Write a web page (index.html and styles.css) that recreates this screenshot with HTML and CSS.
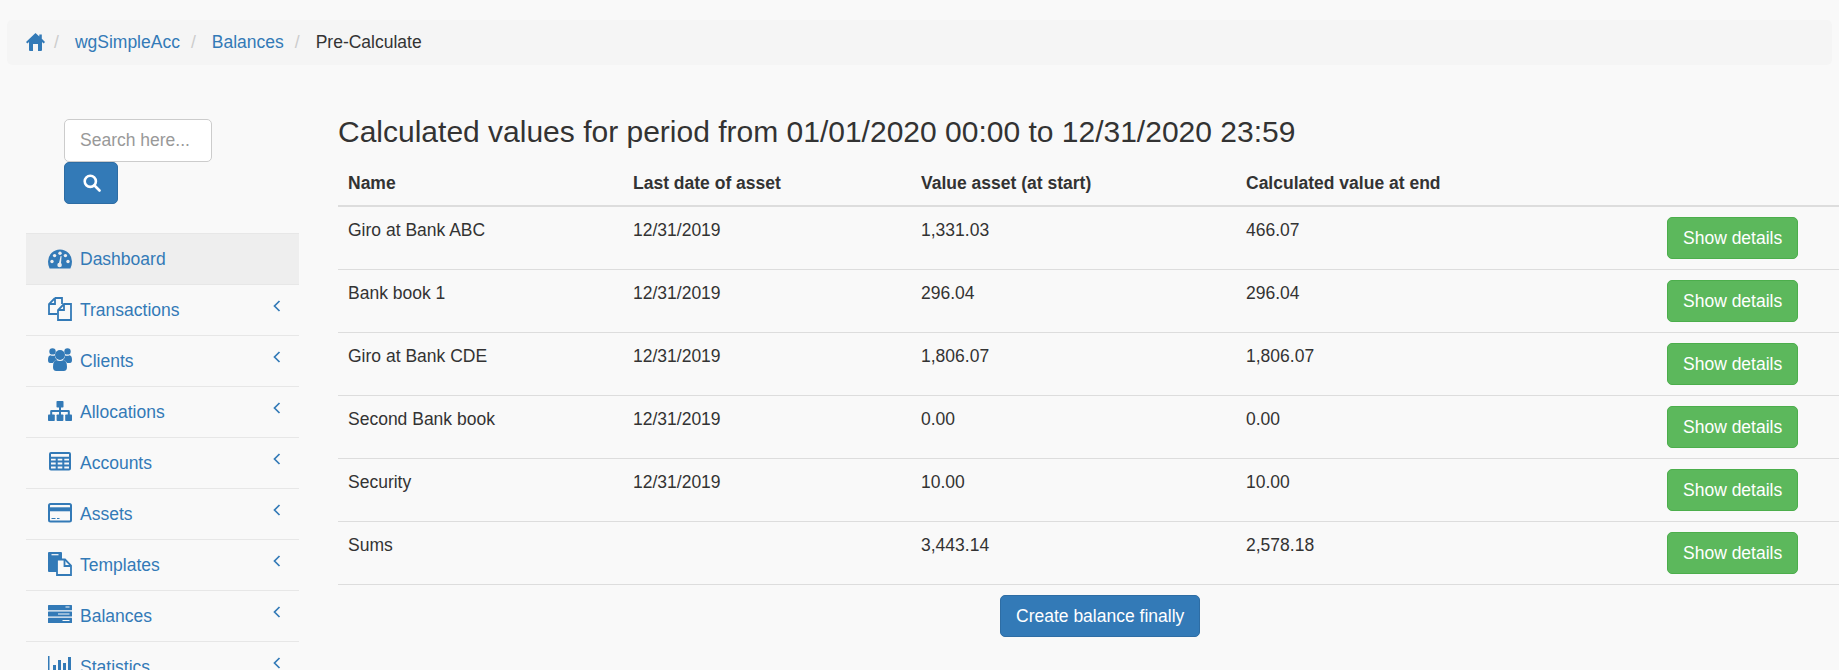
FILE: index.html
```html
<!DOCTYPE html>
<html lang="en">
<head>
  <meta charset="UTF-8" />
  <meta name="viewport" content="width=device-width, initial-scale=1.0"/>
  <title>Pre-Calculate</title>
  <link rel="stylesheet" href="styles.css">
</head>
<body>
  <ol class="breadcrumb">
    <li><a href="#" class="home-link" aria-label="Home">
      <svg class="home-icon" viewBox="0 0 19 18">
        <path d="M9.500 0l3.800 3.500V1.500h2.500v4.300L19 9l-1.300 1.400-1.700-1.500V17q0 1-1 1h-3v-7H7v7H4q-1 0-1-1V8.900l-1.700 1.500L0 9z"/>
      </svg>
    </a></li>
    <li class="crumb"><a href="#">wgSimpleAcc</a></li>
    <li class="crumb"><a href="#">Balances</a></li>
    <li class="crumb active">Pre-Calculate</li>
  </ol>

  <div class="page">
    <aside class="sidebar">
      <form class="search">
        <input type="text" class="search-input" placeholder="Search here..." />
        <button type="button" class="search-btn" aria-label="Search">
          <svg class="search-icon" viewBox="0 0 18 18">
            <circle cx="7.300" cy="7.300" r="5.600"/>
            <path d="M11.500 11.500l5 5"/>
          </svg>
        </button>
      </form>

      <ul class="nav">
        <li><a href="#" class="nav-link current">
          <svg class="nav-icon" viewBox="0 0 24 24">
            <path d="M12 3.500A12 12 0 0 1 24 15.500q0 4-1.600 7H1.600Q0 19.500 0 15.500A12 12 0 0 1 12 3.500z"/>
            <g class="hole-current">
              <circle cx="4" cy="15.500" r="1.700"/><circle cx="6.600" cy="9.600" r="1.700"/><circle cx="12" cy="7.200" r="1.700"/><circle cx="17.400" cy="9.600" r="1.700"/><circle cx="20" cy="15.500" r="1.700"/>
              <circle cx="11.600" cy="19" r="2.300"/><path d="M10.600 18.500l2-8.500 1 .2-.8 8.700z"/>
            </g>
          </svg>
          Dashboard
        </a></li>
        <li><a href="#" class="nav-link">
          <svg class="nav-icon line" viewBox="0 0 24 24">
            <path d="M7 1L1 7v10h8M7 1h7v6M7 1v6H1"/>
            <path d="M16 7l-6 6v10h13V7zM16 7v6h-6"/>
          </svg>
          Transactions
          <svg class="arrow" viewBox="0 0 8 12"><path d="M6.500 1L1.500 6l5 5"/></svg>
        </a></li>
        <li><a href="#" class="nav-link">
          <svg class="nav-icon" viewBox="0 0 24 24">
            <circle cx="4.500" cy="3.400" r="3.200"/><circle cx="19.500" cy="3.400" r="3.200"/><circle cx="12" cy="7" r="5"/>
            <path d="M0 12q0-4.500 2.500-4.800 2 1 4.300 .2 .2 3 2.200 4.400-3 .8-4.200 3.200H2q-2 0-2-3z"/>
            <path d="M24 12q0-4.500-2.500-4.800-2 1-4.300 .2-.2 3-2.200 4.400 3 .8 4.200 3.200H22q2 0 2-3z"/>
            <path d="M5 19q0-6.500 3.300-7 3.700 2.200 7.400 0 3.300 .5 3.300 7 0 4-3.300 4H8.300Q5 23 5 19z"/>
          </svg>
          Clients
          <svg class="arrow" viewBox="0 0 8 12"><path d="M6.500 1L1.500 6l5 5"/></svg>
        </a></li>
        <li><a href="#" class="nav-link">
          <svg class="nav-icon" viewBox="0 0 24 24">
            <rect x="8.500" y="2" width="7" height="6.500" rx=".8"/>
            <rect x="0" y="15.500" width="6.800" height="6.500" rx=".8"/><rect x="8.600" y="15.500" width="6.800" height="6.500" rx=".8"/><rect x="17.200" y="15.500" width="6.800" height="6.500" rx=".8"/>
            <path d="M11 7h2v4h7.500q1.300 0 1.300 1.300V17h-2v-4H13v4h-2v-4H4.200v4h-2v-4.700Q2.200 11 3.500 11H11z"/>
          </svg>
          Allocations
          <svg class="arrow" viewBox="0 0 8 12"><path d="M6.500 1L1.500 6l5 5"/></svg>
        </a></li>
        <li><a href="#" class="nav-link">
          <svg class="nav-icon line heavy" viewBox="0 0 24 24">
            <rect x="2" y="3" width="20" height="16.500" rx="1"/>
            <path d="M2 7.800h20M2 11.500h20M2 15.500h20M8.700 7.800v11.700M15.300 7.800v11.700"/>
          </svg>
          Accounts
          <svg class="arrow" viewBox="0 0 8 12"><path d="M6.500 1L1.500 6l5 5"/></svg>
        </a></li>
        <li><a href="#" class="nav-link">
          <svg class="nav-icon line heavy" viewBox="0 0 24 24">
            <rect x="1" y="3" width="22" height="17.500" rx="1.500"/>
            <path class="band" d="M1 8.300h22"/>
            <path class="thin" d="M3.500 17.500h4M9 17.500h2.500"/>
          </svg>
          Assets
          <svg class="arrow" viewBox="0 0 8 12"><path d="M6.500 1L1.500 6l5 5"/></svg>
        </a></li>
        <li><a href="#" class="nav-link">
          <svg class="nav-icon" viewBox="0 0 24 24">
            <path d="M1 0h12q1 0 1 1v19H1q-1 0-1-1V1q0-1 1-1z"/>
            <path class="slot" d="M3.500 2.700h7"/>
            <path class="sheet" d="M9 7.500h8l6 6V23H9z"/>
            <path class="fold" d="M16.500 8v6h6"/>
          </svg>
          Templates
          <svg class="arrow" viewBox="0 0 8 12"><path d="M6.500 1L1.500 6l5 5"/></svg>
        </a></li>
        <li><a href="#" class="nav-link">
          <svg class="nav-icon" viewBox="0 0 24 24">
            <rect x="0" y="2" width="24" height="5.200" rx=".5"/><rect x="0" y="8.400" width="24" height="5.200" rx=".5"/><rect x="0" y="14.800" width="24" height="5.200" rx=".5"/>
            <path class="slot thin-slot" d="M17.500 4h4M10 11h11.500M14.500 17.500h7"/>
          </svg>
          Balances
          <svg class="arrow" viewBox="0 0 8 12"><path d="M6.500 1L1.500 6l5 5"/></svg>
        </a></li>
        <li><a href="#" class="nav-link">
          <svg class="nav-icon" viewBox="0 0 24 24">
            <path d="M0 2h1.500v19H24v1.500H0z"/>
            <rect x="5" y="11" width="3" height="10"/><rect x="10" y="6" width="3" height="15"/><rect x="15" y="9" width="3" height="12"/><rect x="20" y="3" width="3" height="18"/>
          </svg>
          Statistics
          <svg class="arrow" viewBox="0 0 8 12"><path d="M6.500 1L1.500 6l5 5"/></svg>
        </a></li>
      </ul>
    </aside>

    <main class="content">
      <h3 class="title">Calculated values for period from 01/01/2020 00:00 to 12/31/2020 23:59</h3>
      <table class="balance-table">
        <thead>
          <tr>
            <th class="col-name">Name</th>
            <th class="col-date">Last date of asset</th>
            <th class="col-start">Value asset (at start)</th>
            <th class="col-end">Calculated value at end</th>
            <th class="col-action"></th>
          </tr>
        </thead>
        <tbody>
          <tr><td>Giro at Bank ABC</td><td>12/31/2019</td><td>1,331.03</td><td>466.07</td><td class="cell-action"><button class="btn btn-success">Show details</button></td></tr>
          <tr><td>Bank book 1</td><td>12/31/2019</td><td>296.04</td><td>296.04</td><td class="cell-action"><button class="btn btn-success">Show details</button></td></tr>
          <tr><td>Giro at Bank CDE</td><td>12/31/2019</td><td>1,806.07</td><td>1,806.07</td><td class="cell-action"><button class="btn btn-success">Show details</button></td></tr>
          <tr><td>Second Bank book</td><td>12/31/2019</td><td>0.00</td><td>0.00</td><td class="cell-action"><button class="btn btn-success">Show details</button></td></tr>
          <tr><td>Security</td><td>12/31/2019</td><td>10.00</td><td>10.00</td><td class="cell-action"><button class="btn btn-success">Show details</button></td></tr>
          <tr><td>Sums</td><td></td><td>3,443.14</td><td>2,578.18</td><td class="cell-action"><button class="btn btn-success">Show details</button></td></tr>
        </tbody>
      </table>
      <div class="actions">
        <button class="btn btn-primary">Create balance finally</button>
      </div>
    </main>
  </div>
</body>
</html>
```

FILE: styles.css
```css
html, body {
  height: 670px;
  overflow: hidden;
}

body {
  margin: 0;
  background: #f9f9f9;
  font-family: "Liberation Sans", Arial, sans-serif;
  font-size: 17.5px;
  line-height: 25px;
  color: #333333;
}

a {
  color: #337ab7;
  text-decoration: none;
}

/* Breadcrumb */
.breadcrumb {
  display: flex;
  align-items: center;
  height: 45px;
  margin: 20px 7px 0;
  padding: 0 19px;
  list-style: none;
  background: #f5f5f5;
  border-radius: 5px;
}

.home-link {
  display: flex;
  margin-right: -2px;
}

.home-icon {
  width: 19px;
  height: 18px;
  margin-bottom: 2px;
  fill: #337ab7;
}

.crumb::before {
  content: "/";
  color: #cccccc;
  padding: 0 16px 0 11px;
}

.crumb.active {
  color: #333333;
}

/* Sidebar */
.page {
  display: flex;
}

.sidebar {
  width: 338px;
  flex-shrink: 0;
  padding-top: 54px;
  box-sizing: border-box;
}

.search {
  display: flex;
  flex-direction: column;
  align-items: flex-start;
  margin-left: 64px;
}

.search-input {
  width: 148px;
  height: 43px;
  box-sizing: border-box;
  padding: 7px 15px;
  font-family: inherit;
  font-size: 17.5px;
  color: #555555;
  background: #ffffff;
  border: 1px solid #cccccc;
  border-radius: 5px;
}

.search-input::placeholder {
  color: #999999;
}

.search-btn {
  display: flex;
  align-items: center;
  justify-content: center;
  width: 54px;
  height: 42px;
  padding: 0 0 0 1px;
  background: #337ab7;
  border: 1px solid #2e6da4;
  border-radius: 5px;
}

.search-icon {
  width: 18px;
  height: 18px;
  fill: none;
  stroke: #ffffff;
  stroke-width: 2.6;
  stroke-linecap: round;
}

.nav {
  width: 273px;
  margin: 29px 0 0 26px;
  padding: 0;
  list-style: none;
  border-top: 1px solid #e7e7e7;
}

.nav-link {
  display: flex;
  align-items: center;
  height: 51px;
  box-sizing: border-box;
  padding: 0 18px 0 22px;
  border-bottom: 1px solid #e7e7e7;
}

.nav-link.current {
  background: #eeeeee;
}

.nav-icon {
  width: 24px;
  height: 24px;
  margin-right: 8px;
  margin-bottom: 2px;
  flex-shrink: 0;
  fill: #337ab7;
}

.nav-icon.line {
  fill: none;
  stroke: #337ab7;
  stroke-width: 1.8;
}

.nav-icon.heavy {
  stroke-width: 2;
}

.nav-icon .band {
  stroke-width: 4;
}

.nav-icon .thin {
  stroke-width: 1;
}

.nav-icon .hole-current,
.nav-icon .hole-current path {
  fill: #eeeeee;
}

.nav-icon .slot {
  fill: none;
  stroke: #f9f9f9;
  stroke-width: 1.2;
}

.nav-icon .thin-slot {
  stroke-width: 1;
}

.nav-icon .sheet {
  fill: #f9f9f9;
  stroke: #337ab7;
  stroke-width: 1.8;
}

.nav-icon .fold {
  fill: none;
  stroke: #337ab7;
  stroke-width: 1.8;
}

.arrow {
  width: 8px;
  height: 12px;
  margin-left: auto;
  margin-bottom: 9px;
  fill: none;
  stroke: #337ab7;
  stroke-width: 1.7;
}

/* Main content */
.content {
  flex: 1;
  padding-top: 50px;
}

.title {
  margin: 0 0 12px;
  font-size: 30px;
  font-weight: 400;
  line-height: 33px;
}

.balance-table {
  width: 100%;
  table-layout: fixed;
  border-collapse: collapse;
}

.balance-table th,
.balance-table td {
  box-sizing: border-box;
  padding: 11px 10px 9px;
  text-align: left;
  vertical-align: top;
}

.balance-table th {
  font-weight: 700;
  vertical-align: bottom;
  border-bottom: 2px solid #dddddd;
}

.balance-table td {
  border-bottom: 1px solid #dddddd;
}

.balance-table .cell-action {
  padding: 10px;
}

.col-name { width: 285px; }
.col-date { width: 288px; }
.col-start { width: 325px; }
.col-end { width: 421px; }

.btn {
  display: block;
  height: 42px;
  box-sizing: border-box;
  padding: 0 15px;
  font-family: inherit;
  font-size: 17.5px;
  white-space: nowrap;
  color: #ffffff;
  border-radius: 5px;
  cursor: pointer;
}

.btn-success {
  background: #5cb85c;
  border: 1px solid #4cae4c;
}

.btn-primary {
  background: #337ab7;
  border: 1px solid #2e6da4;
}

.actions {
  display: flex;
  margin-top: 10px;
  padding-left: 662px;
}
```
